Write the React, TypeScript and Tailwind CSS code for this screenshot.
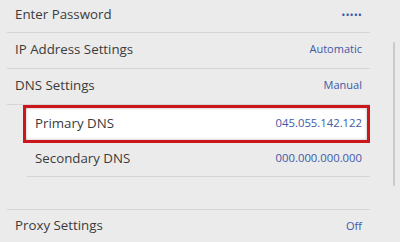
import React from "react";

type Row = { label: string; value: string };

function Divider({ inset = false }: { inset?: boolean }) {
  return <div className={`h-px bg-[#d6d6d6] mr-[30px] ${inset ? "ml-[27px]" : "ml-[7px]"}`} />;
}

function SettingRow({ label, value, h = "h-[35px]" }: Row & { h?: string }) {
  return (
    <div className={`flex items-center justify-between pl-[15px] pr-[38px] pb-[2px] ${h}`}>
      <span className="text-[13.3px] text-[#3b3b3b]">{label}</span>
      <span className="text-[11px] text-[#4259a8]">{value}</span>
    </div>
  );
}

export default function App() {
  return (
    <div
      className="relative w-[400px] h-[242px] overflow-hidden bg-[#ebebeb]"
      style={{ fontFamily: '"Open Sans", "Liberation Sans", sans-serif' }}
    >
      <SettingRow label="Enter Password" value="•••••" h="h-[32px]" />
      <Divider />
      <SettingRow label="IP Address Settings" value="Automatic" />
      <Divider />
      <SettingRow label="DNS Settings" value="Manual" />
      <Divider />

      <div className="ml-[23px] mr-[30px] h-[38px] border-[3px] border-[#cc161c] bg-white shadow-[inset_0_0_3px_rgba(0,0,0,0.3)] flex items-center justify-between pl-[9px] pr-[5px] pb-[1px]">
        <span className="text-[13.3px] text-[#3b3b3b]">Primary DNS</span>
        <span className="text-[11.3px] text-[#4259a8]">045.055.142.122</span>
      </div>

      <div className="flex items-center justify-between pl-[35px] pr-[38px] pb-[2px] h-[33px]">
        <span className="text-[13.3px] text-[#3b3b3b]">Secondary DNS</span>
        <span className="text-[11.3px] text-[#4259a8]">000.000.000.000</span>
      </div>
      <Divider inset />
      <div className="h-[32px]" />
      <Divider />
      <SettingRow label="Proxy Settings" value="Off" h="h-[34px]" />
      <Divider />

      <div className="absolute left-[393px] top-[42px] w-[2px] h-[144px] bg-[#cacaca] rounded-full" />
    </div>
  );
}
